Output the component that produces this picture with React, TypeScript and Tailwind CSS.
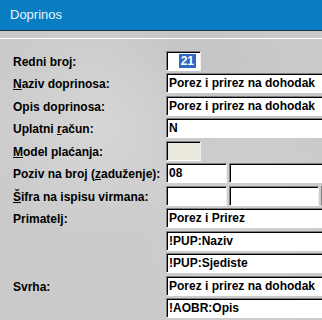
import React from "react";

const font = { fontFamily: '"Liberation Sans", Arial, sans-serif' };

function Field({ w, children, disabled, right }: { w: string; children?: React.ReactNode; disabled?: boolean; right?: boolean }) {
  return (
    <div
      className={`${w} h-[20px] shrink-0 border border-t-[#808080] border-l-[#808080] border-b-white border-r-[#f0f0f0] shadow-[inset_1px_1px_0_#000] flex items-center ${disabled ? "bg-[#ebe9dd]" : "bg-white"} ${right ? "justify-end pr-[4px]" : "pl-[2px]"} overflow-hidden whitespace-nowrap text-[12px] font-bold text-black leading-none`}
    >
      {children}
    </div>
  );
}

function U({ c }: { c: string }) {
  return <span className="underline underline-offset-[1px]">{c}</span>;
}

type Row = { label?: React.ReactNode; fields: React.ReactNode; h: string };

export default function App() {
  const rows: Row[] = [
    {
      h: "h-[22px]",
      label: "Redni broj:",
      fields: (
        <Field w="w-[35px]" right>
          <span className="bg-[#316ac5] text-white px-[2px] h-[14px] flex items-center">21</span>
        </Field>
      ),
    },
    { h: "h-[23px]", label: <><U c="N" />aziv doprinosa:</>, fields: <Field w="w-[160px]">Porez i prirez na dohodak</Field> },
    { h: "h-[22px]", label: "Opis doprinosa:", fields: <Field w="w-[160px]">Porez i prirez na dohodak</Field> },
    { h: "h-[23px]", label: <>Uplatni <U c="r" />ačun:</>, fields: <Field w="w-[160px]">N</Field> },
    { h: "h-[22px]", label: <><U c="M" />odel plaćanja:</>, fields: <Field w="w-[35px]" disabled /> },
    {
      h: "h-[23px]",
      label: <>Poziv na broj (<U c="z" />aduženje):</>,
      fields: (
        <div className="flex gap-[2px] shrink-0">
          <Field w="w-[61px]">08</Field>
          <Field w="w-[100px]" />
        </div>
      ),
    },
    {
      h: "h-[22px]",
      label: <><U c="Š" />ifra na ispisu virmana:</>,
      fields: (
        <div className="flex gap-[2px] shrink-0">
          <Field w="w-[61px]" />
          <Field w="w-[90px]" />
          <Field w="w-[10px]" />
        </div>
      ),
    },
    { h: "h-[23px]", label: "Primatelj:", fields: <Field w="w-[160px]">Porez i Prirez</Field> },
    { h: "h-[22px]", fields: <Field w="w-[160px]">!PUP:Naziv</Field> },
    { h: "h-[23px]", fields: <Field w="w-[160px]">!PUP:Sjediste</Field> },
    { h: "h-[22px]", label: "Svrha:", fields: <Field w="w-[160px]">Porez i prirez na dohodak</Field> },
    { h: "h-[23px]", fields: <Field w="w-[160px]">!AOBR:Opis</Field> },
  ];

  return (
    <div
      style={font}
      className="w-[322px] h-[320px] overflow-hidden bg-[#cacaca] bg-[radial-gradient(circle_at_30%_40%,#d6d6d6_0,transparent_40%),radial-gradient(circle_at_75%_70%,#d2d2d2_0,transparent_35%),radial-gradient(circle_at_60%_20%,#c4c4c4_0,transparent_30%)]"
    >
      <div className="h-[30px] bg-[#0a7dc2] flex items-center pl-[10px] text-[13px] text-[#e6f6ff]">Doprinos</div>
      <div className="h-[1px] bg-[#1c2f3d]" />
      <div className="h-[7px]" />
      <div className="h-[1px] bg-white" />
      <div className="h-[12px]" />
      <div className="flex flex-col">
        {rows.map((r, i) => (
          <div key={i} className={`${r.h} flex items-start`}>
            <div className="w-[166px] shrink-0 pl-[13px] h-[20px] flex items-center pt-[1px] text-[12px] font-bold text-black whitespace-nowrap">
              <span>{r.label}</span>
            </div>
            {r.fields}
          </div>
        ))}
      </div>
    </div>
  );
}
